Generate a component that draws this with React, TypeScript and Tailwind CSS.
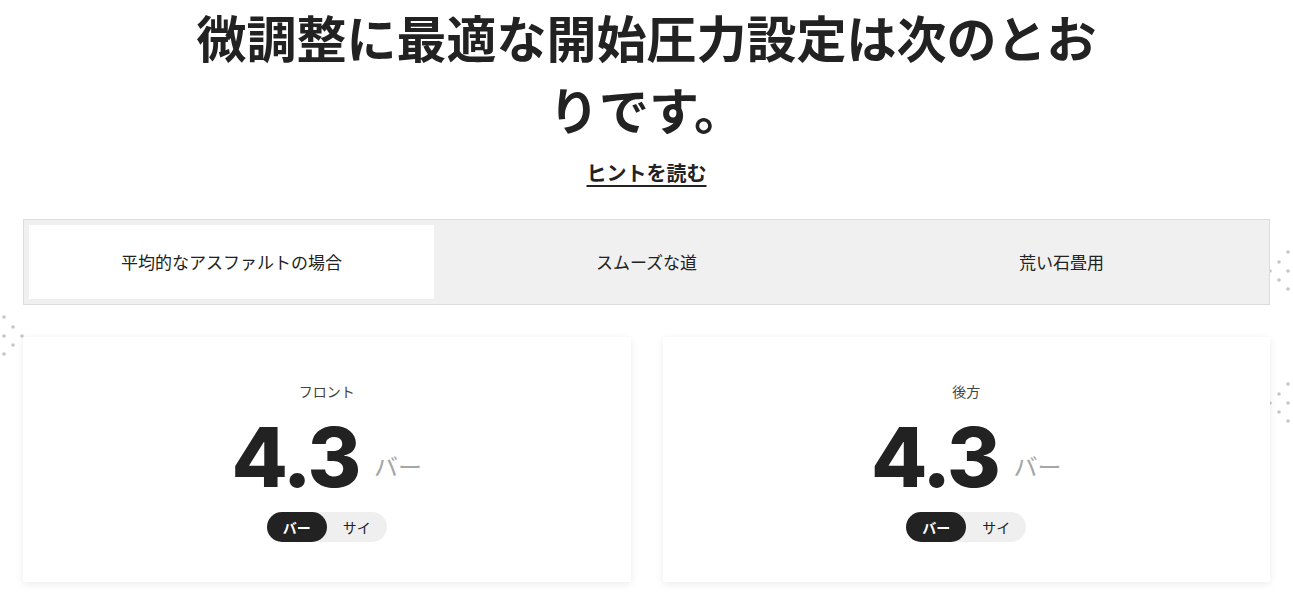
import { useState } from "react";

const tabs = ["平均的なアスファルトの場合", "スムーズな道", "荒い石畳用"];

const jp = "font-['Noto_Sans_CJK_JP','Noto_Sans',sans-serif]";

function Dots({ className, flip }: { className: string; flip?: boolean }) {
  // outer column of 3, middle of 2, inner of 1
  const pts = [
    [20, 2],
    [11, 12],
    [20, 21],
    [2, 21],
    [11, 30],
    [20, 39],
  ];
  return (
    <svg className={className} width="24" height="42" viewBox="0 0 24 42" fill="#c6c6c6">
      {pts.map(([x, y], i) => (
        <circle key={i} cx={flip ? 22 - x : x} cy={y} r="1.8" />
      ))}
    </svg>
  );
}

function PressureCard({ label }: { label: string }) {
  const [unit, setUnit] = useState<"bar" | "psi">("bar");
  return (
    <div className="bg-white shadow-[0_2px_8px_rgba(0,0,0,0.08)] pt-[44px] pb-[40px] flex flex-col items-center">
      <p className="text-[14px] leading-[20px] text-[#444]">{label}</p>
      <div className="mt-[16px] flex items-end gap-[15px]">
        <span className="font-['Inter',sans-serif] font-extrabold text-[82px] leading-none tracking-[-0.03em] text-[#222]">
          4.3
        </span>
        <span className="pb-[15px] text-[24px] text-[#a6a6a6]">バー</span>
      </div>
      <div className="mt-[13px] flex rounded-full bg-[#efefef] h-[30px] text-[14px]">
        <button
          onClick={() => setUnit("bar")}
          className={
            unit === "bar"
              ? "w-[60px] rounded-full bg-[#222] text-white font-bold"
              : "w-[60px] rounded-full text-[#222]"
          }
        >
          バー
        </button>
        <button
          onClick={() => setUnit("psi")}
          className={
            unit === "psi"
              ? "w-[60px] rounded-full bg-[#222] text-white font-bold"
              : "w-[60px] rounded-full text-[#222]"
          }
        >
          サイ
        </button>
      </div>
    </div>
  );
}

export default function App() {
  const [active, setActive] = useState(0);

  return (
    <div className={`relative min-h-screen bg-white text-[#222] ${jp}`}>
      {/* decorative dots, behind the content */}
      <Dots flip className="absolute left-[2px] top-[315px]" />
      <Dots className="absolute right-[1px] top-[250px]" />
      <Dots className="absolute right-[1px] top-[382px]" />

      <div className="relative px-[23px]">
        <h1 className="mx-auto max-w-[930px] text-center text-[50px] leading-[72px] font-bold">
          微調整に最適な開始圧力設定は次のとおりです。
        </h1>
        <div className="mt-[14px] text-center">
          <a href="#" className="text-[20px] font-bold underline underline-offset-[4px] decoration-2">
            ヒントを読む
          </a>
        </div>

        {/* Tabs */}
        <div className="mt-[31px] grid grid-cols-3 border border-[#dcdcdc] bg-[#f0f0f0]">
          {tabs.map((t, i) => (
            <button key={t} onClick={() => setActive(i)} className="h-[84px] p-[5px]">
              <span
                className={
                  i === active
                    ? "flex h-full items-center justify-center bg-white text-[17px]"
                    : "flex h-full items-center justify-center text-[17px]"
                }
              >
                {t}
              </span>
            </button>
          ))}
        </div>

        {/* Cards */}
        <div className="mt-[32px] grid grid-cols-2 gap-8">
          <PressureCard label="フロント" />
          <PressureCard label="後方" />
        </div>
      </div>
    </div>
  );
}
